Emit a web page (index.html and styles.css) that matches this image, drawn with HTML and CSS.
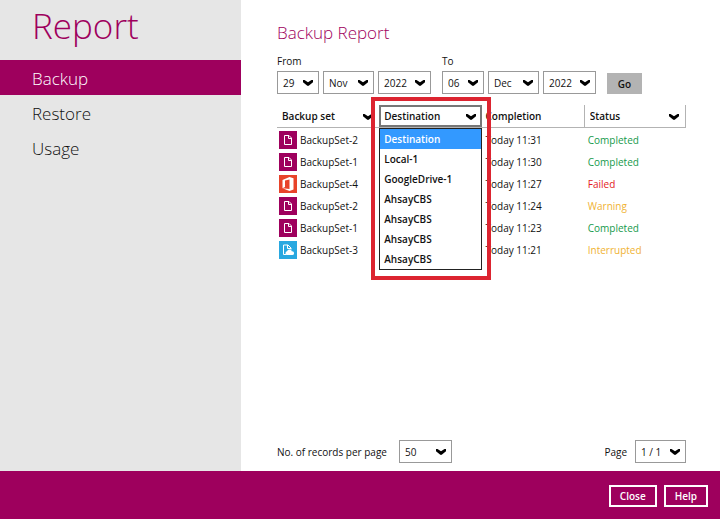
FILE: index.html
```html
<!DOCTYPE html>
<html lang="en">

<head>
    <meta charset="UTF-8">
    <meta name="viewport" content="width=device-width, initial-scale=1.0">
    <title>Backup Report</title>
    <link rel="stylesheet" href="styles.css">
</head>

<body>
    <svg class="symbols" aria-hidden="true">
        <symbol id="chevron" viewBox="0 0 10 6">
            <path d="M0 0 H1.5 L5 2.3 L8.5 0 H10 V2.2 L6 5.6 Q5 6.2 4 5.6 L0 2.2 Z" />
        </symbol>
        <symbol id="file" viewBox="0 0 18 18">
            <rect width="18" height="18" fill="#9e005d" />
            <path d="M5.5 4.5 H10 L12.5 7 V13.5 H5.5 Z M9.5 4.5 V7.5 H12.5" fill="none" stroke="#fff" />
        </symbol>
        <symbol id="office" viewBox="0 0 18 18">
            <rect width="18" height="18" fill="#e8432a" />
            <path d="M3.5 5 L10.5 2 L14.5 3.2 V14.5 L10.5 16 L3.5 13.3 L10.5 14.1 V4.5 L6 5.6 V12 L3.5 13.3 Z" fill="#fff" />
        </symbol>
        <symbol id="cloud" viewBox="0 0 18 18">
            <rect width="18" height="18" fill="#29a8e0" />
            <path d="M7 13.5 H4.5 V4 H9 L12 7 V8.5 M8.5 4 V7.5 H12" fill="none" stroke="#fff" />
            <path d="M7.5 14 A2 2 0 0 1 8 10.3 A2.6 2.6 0 0 1 13 10.4 A1.8 1.8 0 0 1 13.5 14 Z" fill="#fff" />
        </symbol>
    </svg>

    <div class="window">
        <nav class="sidebar">
            <h1>Report</h1>
            <a class="active" href="#backup">Backup</a>
            <a href="#restore">Restore</a>
            <a href="#usage">Usage</a>
        </nav>

        <main>
            <h2>Backup Report</h2>
            <form class="filters">
                <fieldset>
                    <legend>From</legend>
                    <div class="dates">
                        <span class="select day"><select aria-label="From day"><option>29</option></select><svg><use href="#chevron" /></svg></span>
                        <span class="select month"><select aria-label="From month"><option>Nov</option></select><svg><use href="#chevron" /></svg></span>
                        <span class="select year"><select aria-label="From year"><option>2022</option></select><svg><use href="#chevron" /></svg></span>
                    </div>
                </fieldset>
                <fieldset>
                    <legend>To</legend>
                    <div class="dates">
                        <span class="select day"><select aria-label="To day"><option>06</option></select><svg><use href="#chevron" /></svg></span>
                        <span class="select month"><select aria-label="To month"><option>Dec</option></select><svg><use href="#chevron" /></svg></span>
                        <span class="select year"><select aria-label="To year"><option>2022</option></select><svg><use href="#chevron" /></svg></span>
                    </div>
                </fieldset>
                <button class="go" type="button">Go</button>
            </form>

            <table>
                <thead>
                    <tr>
                        <th><span class="select"><select aria-label="Backup set"><option>Backup set</option></select><svg><use href="#chevron" /></svg></span></th>
                        <th class="destination">
                            <span class="select open"><select aria-label="Destination"><option>Destination</option></select><svg><use href="#chevron" /></svg></span>
                            <ul class="menu" role="listbox" aria-label="Destination">
                                <li role="option" aria-selected="true">Destination</li>
                                <li role="option">Local-1</li>
                                <li role="option">GoogleDrive-1</li>
                                <li role="option">AhsayCBS</li>
                                <li role="option">AhsayCBS</li>
                                <li role="option">AhsayCBS</li>
                                <li role="option">AhsayCBS</li>
                            </ul>
                            <div class="highlight"></div>
                        </th>
                        <th class="completion">Completion</th>
                        <th class="status"><span class="select"><select aria-label="Status"><option>Status</option></select><svg><use href="#chevron" /></svg></span></th>
                    </tr>
                </thead>
                <tbody>
                    <tr>
                        <td><div class="set"><svg><use href="#file" /></svg>BackupSet-2</div></td>
                        <td></td>
                        <td>Today 11:31</td>
                        <td class="completed">Completed</td>
                    </tr>
                    <tr>
                        <td><div class="set"><svg><use href="#file" /></svg>BackupSet-1</div></td>
                        <td></td>
                        <td>Today 11:30</td>
                        <td class="completed">Completed</td>
                    </tr>
                    <tr>
                        <td><div class="set"><svg><use href="#office" /></svg>BackupSet-4</div></td>
                        <td></td>
                        <td>Today 11:27</td>
                        <td class="failed">Failed</td>
                    </tr>
                    <tr>
                        <td><div class="set"><svg><use href="#file" /></svg>BackupSet-2</div></td>
                        <td></td>
                        <td>Today 11:24</td>
                        <td class="warning">Warning</td>
                    </tr>
                    <tr>
                        <td><div class="set"><svg><use href="#file" /></svg>BackupSet-1</div></td>
                        <td></td>
                        <td>Today 11:23</td>
                        <td class="completed">Completed</td>
                    </tr>
                    <tr>
                        <td><div class="set"><svg><use href="#cloud" /></svg>BackupSet-3</div></td>
                        <td></td>
                        <td>Today 11:21</td>
                        <td class="warning">Interrupted</td>
                    </tr>
                </tbody>
            </table>

            <div class="paging">
                <div class="records">
                    <label for="records">No. of records per page</label>
                    <span class="select year"><select id="records"><option>50</option></select><svg><use href="#chevron" /></svg></span>
                </div>
                <div class="pages">
                    <label for="page">Page</label>
                    <span class="select month"><select id="page"><option>1 / 1</option></select><svg><use href="#chevron" /></svg></span>
                </div>
            </div>
        </main>
    </div>

    <footer>
        <button type="button">Close</button>
        <button type="button">Help</button>
    </footer>
</body>

</html>
```
FILE: styles.css
```css
* {
    margin: 0;
    padding: 0;
    box-sizing: border-box;
}

body {
    display: flex;
    flex-direction: column;
    min-height: 100vh;
    background: #fff;
    color: #111;
    font-family: "Open Sans", sans-serif;
    font-size: 10px;
    line-height: 16px;
}

button,
select {
    font: inherit;
    color: inherit;
}

button {
    cursor: pointer;
}

.symbols {
    position: absolute;
    width: 0;
    height: 0;
}

.window {
    flex: 1;
    display: flex;
}

/* sidebar */
.sidebar {
    flex: 0 0 241px;
    background: #e6e6e6;
}

.sidebar h1 {
    height: 60px;
    padding: 2px 32px 0;
    color: #9e005d;
    font-size: 35px;
    font-weight: 300;
    line-height: 48px;
}

.sidebar a {
    display: block;
    padding: 2px 32px 0;
    color: #111;
    font-size: 17px;
    font-weight: 300;
    line-height: 33px;
    text-decoration: none;
}

.sidebar .active {
    background: #9e005d;
    color: #fff;
}

/* report */
main {
    flex: 1;
    display: flex;
    flex-direction: column;
    min-width: 0;
    padding: 21px 34px 8px 36px;
}

h2 {
    color: #9e005d;
    font-size: 17px;
    font-weight: 300;
    line-height: 24px;
}

.filters {
    display: flex;
    align-items: flex-end;
    gap: 11px;
    margin: 8px 0 11px;
}

fieldset {
    border: 0;
}

.dates {
    display: flex;
    gap: 4px;
    margin-top: 2px;
}

.select {
    position: relative;
    display: block;
    height: 23px;
}

.select select {
    appearance: none;
    display: block;
    width: 100%;
    height: 100%;
    padding: 0 5px;
    border: 1px solid #999;
    border-radius: 0;
    background: #fff;
}

.select svg {
    position: absolute;
    top: 9px;
    right: 6px;
    width: 10px;
    height: 6px;
    fill: #000;
    pointer-events: none;
}

.day {
    width: 42px;
}

.month {
    width: 51px;
}

.year {
    width: 53px;
}

.go {
    width: 35px;
    height: 21px;
    border: 0;
    background: #b3b3b3;
    font-weight: 600;
}

/* table */
table {
    width: 100%;
    table-layout: fixed;
    border-collapse: separate;
    border-spacing: 0;
}

th {
    width: 25%;
    height: 23px;
    border-bottom: 1px solid #b3b3b3;
    font-weight: 600;
    text-align: left;
}

th .select {
    height: 22px;
}

th .select select {
    border: 0;
    padding: 0 5px;
}

.completion {
    padding-left: 4px;
}

.status {
    border-left: 1px solid #b3b3b3;
    border-right: 1px solid #b3b3b3;
}

.destination {
    position: relative;
}

th .open select {
    border: 2px solid #777;
    padding: 0 3px;
}

.menu {
    position: absolute;
    z-index: 1;
    top: 23px;
    left: 0;
    width: 100%;
    border: 1px solid #222;
    background: #fff;
    list-style: none;
}

.menu li {
    padding: 0 4px;
    line-height: 20px;
}

.menu [aria-selected="true"] {
    background: #3399ff;
    color: #fff;
}

.highlight {
    position: absolute;
    z-index: 2;
    inset: -8px -9px -153px -8px;
    border: 4px solid #dc2430;
    pointer-events: none;
}

td {
    height: 22px;
    padding: 1px 0 0 4px;
}

td:first-child {
    padding-left: 2px;
}

.set {
    display: flex;
    align-items: center;
    gap: 3px;
}

.set svg {
    width: 18px;
    height: 18px;
}

.completed {
    color: #159a4c;
}

.failed {
    color: #e31b23;
}

.warning {
    color: #f0b232;
}

/* bottom */
.paging {
    display: flex;
    justify-content: space-between;
    margin-top: auto;
}

.records,
.pages {
    display: flex;
    align-items: center;
    gap: 8px;
}

.records {
    gap: 12px;
}

footer {
    display: flex;
    justify-content: flex-end;
    gap: 7px;
    padding: 14px 12px 12px;
    background: #9e005d;
    color: #fff;
}

footer button {
    height: 22px;
    padding: 0 9px;
    border: 2px solid #fff;
    background: #9e005d;
    font-weight: 600;
    line-height: 16px;
}
```
